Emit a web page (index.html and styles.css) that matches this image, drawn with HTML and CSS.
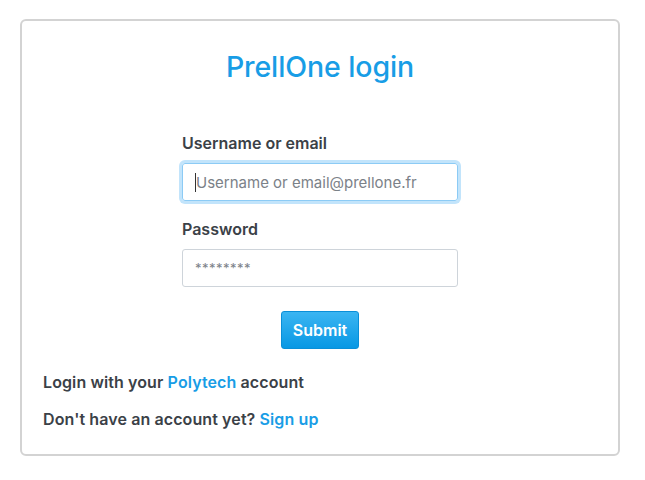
FILE: index.html
```html
<!DOCTYPE html>
<html>
<head>
<meta charset="utf-8">
<link rel="stylesheet" href="styles.css">
</head>
<body>
<div class="card">
  <h1 class="title">PrellOne login</h1>
  <form class="form">
    <label class="label" for="user">Username or email</label>
    <div class="input focused"><span class="caret"></span><span class="ph">Username or email@prellone.fr</span></div>
    <label class="label" for="pass">Password</label>
    <div class="input"><span class="ph stars">********</span></div>
    <div class="actions"><button type="button" class="btn">Submit</button></div>
  </form>
  <p class="line first">Login with your <a class="link">Polytech</a> account</p>
  <p class="line">Don't have an account yet? <a class="link">Sign up</a></p>
</div>
</body>
</html>
```
FILE: styles.css
```css
html, body { margin: 0; padding: 0; background: #fff; }
body {
  font-family: Inter, "Noto Sans", "Liberation Sans", sans-serif;
  color: #3b4147;
  padding: 19px 25px 0 20px;
}
.card {
  width: 554px;
  height: 433px;
  border: 2px solid #d3d3d3;
  border-radius: 6px;
  padding: 0 21px;
}
.title {
  margin: 26px 0 0;
  text-align: center;
  font-size: 28.5px;
  font-weight: 500;
  color: #189de6;
  letter-spacing: -0.1px;
  line-height: 40px;
}
.form {
  width: 276px;
  margin: 46px auto 0;
  display: flex;
  flex-direction: column;
}
.label {
  font-size: 16px;
  font-weight: 600;
  line-height: 20px;
  color: #3b4147;
  margin-bottom: 10px;
}
.input {
  height: 38px;
  box-sizing: border-box;
  border: 1px solid #ced4da;
  border-radius: 3px;
  display: flex;
  align-items: center;
  padding: 0 12px;
  margin-bottom: 18px;
}
.input.focused {
  border-color: #8ccbf5;
  box-shadow: 0 0 0 3px #c2e4fb;
}
.caret {
  width: 1px;
  height: 19px;
  background: #333;
}
.ph {
  font-size: 15px;
  color: #7b8188;
}
.stars { font-size: 13px; letter-spacing: 0.5px; }
.actions {
  display: flex;
  justify-content: center;
  margin-top: 6px;
}
.btn {
  width: 78px;
  height: 38px;
  border: 1px solid #0a8fd8;
  border-radius: 3px;
  background: linear-gradient(#3bb5f2, #0898e4);
  color: #fff;
  font-family: inherit;
  font-size: 16px;
  font-weight: 600;
  padding: 0;
}
.line {
  margin: 17px 0 0;
  font-size: 16px;
  font-weight: 600;
  line-height: 20px;
  letter-spacing: 0.1px;
}
.line.first { margin-top: 23px; }
.link { color: #189de6; text-decoration: none; }
```
